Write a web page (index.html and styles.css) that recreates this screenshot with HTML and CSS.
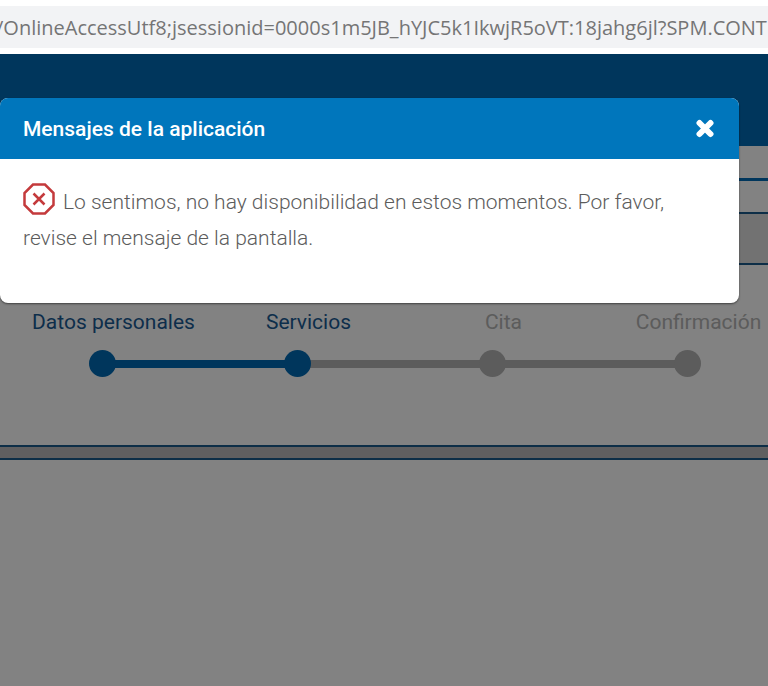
FILE: index.html
```html
<!DOCTYPE html>
<html lang="es">
<head>
  <meta charset="utf-8">
  <title>Mensajes de la aplicación</title>
  <link rel="stylesheet" href="styles.css">
</head>
<body>
<div class="toolbar">
  <input class="address" type="text" aria-label="URL" value="/OnlineAccessUtf8;jsessionid=0000s1m5JB_hYJC5k1IkwjR5oVT:18jahg6jl?SPM.CONTEXT">
</div>
<div class="page">
  <div class="header"></div>
  <div class="userbar"></div>
  <div class="menubar"></div>
  <div class="titlebar"></div>
  <div class="wizard">
    <ol class="steps">
      <li class="step done">Datos personales<span class="dot"></span></li>
      <li class="step done">Servicios<span class="dot"></span></li>
      <li class="step">Cita<span class="dot"></span></li>
      <li class="step">Confirmación<span class="dot"></span></li>
    </ol>
  </div>
  <div class="divider"></div>

  <div class="overlay">
    <div class="modal" role="dialog" aria-labelledby="modal-title">
      <div class="modal-header">
        <h1 class="modal-title" id="modal-title">Mensajes de la aplicación</h1>
        <button class="close" type="button" aria-label="Cerrar">
          <svg width="20" height="20" viewBox="0 0 20 20"><path d="M4.500 4L15.500 15M15.500 4L4.500 15" stroke="#fff" stroke-width="6" stroke-linecap="round"/></svg>
        </button>
      </div>
      <div class="modal-body">
        <p class="message"><svg class="error-icon" width="32" height="32" viewBox="0 0 32 32" fill="none" stroke="#c43a3c"><path d="M10 1.500H22L30.500 10V22L22 30.500H10L1.500 22V10Z" stroke-width="2.500"/><path d="M10.500 10.500L21.500 21.500M21.500 10.500L10.500 21.500" stroke-width="2.500"/></svg>Lo sentimos, no hay disponibilidad en estos momentos. Por favor, revise el mensaje de la pantalla.</p>
      </div>
    </div>
  </div>
</div>
</body>
</html>
```
FILE: styles.css
```css
* { box-sizing: border-box; }

body {
  margin: 0;
  min-height: 100vh;
  display: flex;
  flex-direction: column;
  overflow: hidden;
  font-family: Roboto, sans-serif;
  font-size: 21px;
  font-weight: 300;
  color: #5c5c5c;
}

/* browser bar */
.toolbar { padding: 6px 0; background-color: #fff; }

.address {
  display: block;
  width: 100%;
  height: 42px;
  padding: 0;
  border: 0;
  background-color: #f2f3f5;
  color: #757575;
  font-family: "Open Sans", sans-serif;
  font-size: 20px;
  text-indent: -4px;
}

/* page behind the dialog */
.page {
  position: relative;
  flex: 1;
  background-color: #fff;
}

.header { height: 92px; background-color: #006ab4; }
.userbar { height: 35px; border-bottom: 3px solid #006ab4; }
.menubar { height: 33px; border-bottom: 2px solid #1a5b8c; }
.titlebar { height: 51px; border-bottom: 2px solid #1a5b8c; background-color: #e0e0e0; }

.wizard { padding: 39px 0 68px 16px; }

.steps {
  display: grid;
  grid-template-columns: repeat(4, 1fr);
  margin: 0 -28px 0 0;
  padding: 0;
  list-style: none;
}

.step {
  position: relative;
  text-align: center;
  line-height: 36px;
  font-weight: 400;
  color: #b4b4b4;
}

.dot {
  display: block;
  width: 27px;
  height: 27px;
  margin: 10px auto 0;
  border-radius: 50%;
  background-color: #b4b4b4;
  position: relative;
  right: 11px;
}

/* bar that joins a step to the one before it */
.step + .step::before {
  content: "";
  position: absolute;
  right: 50%;
  bottom: 9px;
  width: 100%;
  height: 8px;
  background-color: #b4b4b4;
}

.done { color: #1a5b94; }
.done .dot,
.step + .done::before { background-color: #006ab4; }
.done .dot { z-index: 1; }

.divider {
  height: 15px;
  border-top: 2px solid #1a5b8c;
  border-bottom: 2px solid #1a5b8c;
  background-color: #bcbabd;
}

/* dialog */
.overlay {
  position: absolute;
  inset: 0;
  z-index: 2;
  padding: 44px 29px 0 0;
  background-color: rgba(0, 0, 0, .49);
}

.modal {
  border-radius: 8px;
  background-color: #fff;
  box-shadow: 0 1px 2px rgba(0, 0, 0, .5);
}

.modal-header {
  display: flex;
  align-items: center;
  justify-content: space-between;
  height: 61px;
  padding: 0 24px 0 23px;
  border-radius: 8px 8px 0 0;
  background-color: #0076bc;
}

.modal-title {
  margin: 0;
  font-size: 21px;
  font-weight: 500;
  color: #fff;
}

.close {
  display: flex;
  padding: 0;
  border: 0;
  background: none;
}

.modal-body { padding: 24px 23px 47px; }
.message { margin: 0; line-height: 36px; }
.error-icon { margin-right: 8px; vertical-align: -6px; }
```
